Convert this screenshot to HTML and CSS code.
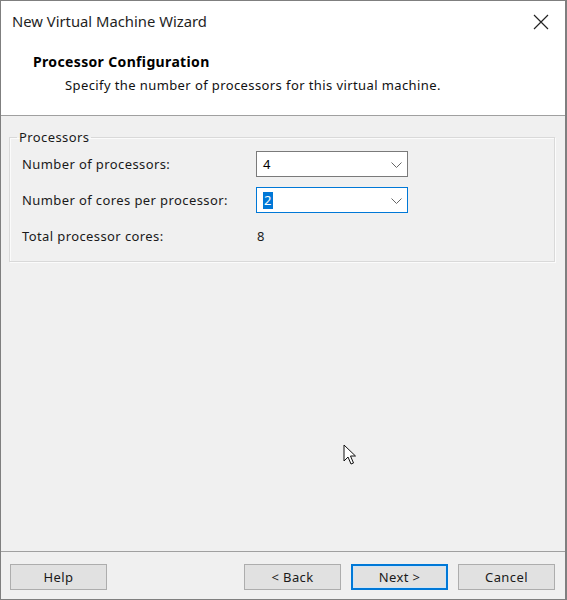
FILE: index.html
```html
<!DOCTYPE html>
<html lang="en">
<head>
  <meta charset="UTF-8">
  <meta name="viewport" content="width=device-width, initial-scale=1.0">
  <title>New Virtual Machine Wizard</title>
  <link rel="stylesheet" href="styles.css">
</head>
<body>
  <div class="window">
    <div class="titlebar">
      <span class="title">New Virtual Machine Wizard</span>
      <svg class="close" width="16" height="16" viewBox="0 0 16 16">
        <path d="M1 1 L15 15 M15 1 L1 15" stroke="#222" stroke-width="1.2" fill="none"/>
      </svg>
    </div>

    <div class="header">
      <div class="heading">Processor Configuration</div>
      <div class="subtitle">Specify the number of processors for this virtual machine.</div>
    </div>

    <div class="content">
      <fieldset class="group">
        <legend>Processors</legend>
        <div class="row">
          <span class="label">Number of processors:</span>
          <div class="combo">
            <span class="value">4</span>
            <svg class="chevron" width="11" height="6" viewBox="0 0 11 6"><path d="M0.5 0.5 L5.5 5.5 L10.5 0.5" stroke="#666" fill="none"/></svg>
          </div>
        </div>
        <div class="row">
          <span class="label">Number of cores per processor:</span>
          <div class="combo focused">
            <span class="value selected">2</span>
            <svg class="chevron" width="11" height="6" viewBox="0 0 11 6"><path d="M0.5 0.5 L5.5 5.5 L10.5 0.5" stroke="#666" fill="none"/></svg>
          </div>
        </div>
        <div class="row">
          <span class="label">Total processor cores:</span>
          <span class="total">8</span>
        </div>
      </fieldset>

      <svg class="cursor" width="14" height="22" viewBox="0 0 14 22">
        <path d="M1 1 L1 17 L5 13 L8 20 L10.5 19 L7.5 12 L12.5 12 Z" fill="#fff" stroke="#111" stroke-width="1" stroke-linejoin="miter"/>
      </svg>
    </div>

    <div class="footer">
      <button class="btn">Help</button>
      <div class="spacer"></div>
      <button class="btn">&lt; Back</button>
      <button class="btn default">Next &gt;</button>
      <button class="btn">Cancel</button>
    </div>
  </div>
</body>
</html>
```

FILE: styles.css
```css
* {
  margin:0;
  padding:0;
  box-sizing:border-box;
}

body {
  width:567px;
  height:600px;
  background:#fff;
  font-family:"Noto Sans", "Open Sans", sans-serif;
  font-size:13px;
  letter-spacing:0.4px;
  color:#1a1a1a;
}

.window {
  width:567px;
  height:600px;
  border:1px solid #7f7f7f;
  border-right-width:2px;
  display:flex;
  flex-direction:column;
  background:#f0f0f0;
}

.titlebar {
  height:43px;
  background:#fff;
  display:flex;
  align-items:center;
  justify-content:space-between;
  padding:0 16px 0 11px;
}

.title {
  font-size:14.8px;
  letter-spacing:0;
  color:#1f1f1f;
  margin-top:-4px;
}

.close {
  margin-top:-2px;
}

.header {
  background:#fff;
  padding:9px 0 21px 32px;
  border-bottom:1px solid #a0a0a0;
}

.heading {
  font-weight:bold;
  font-size:14px;
  letter-spacing:0.35px;
  line-height:18px;
  color:#000;
}

.subtitle {
  margin-top:5px;
  margin-left:32px;
  line-height:18px;
  color:#111;
}

.content {
  flex:1;
  position:relative;
  padding:12px 10px 0 8px;
}

.group {
  border:1px solid #d9d9d9;
  box-shadow:inset 1px 1px 0 #fbfbfb, 1px 1px 0 #fbfbfb;
  padding:5px 12px 12px 12px;
}

.group legend {
  margin-left:-5px;
  padding:0 2px;
  line-height:18px;
  color:#1a1a1a;
}

.row {
  display:grid;
  grid-template-columns:234px 152px;
  align-items:center;
  height:26px;
  margin-bottom:10px;
}

.row:last-child {
  margin-bottom:0;
}

.combo {
  height:26px;
  background:#fff;
  border:1px solid #7a7a7a;
  display:flex;
  align-items:center;
  justify-content:space-between;
  padding:0 5px 0 6px;
}

.combo.focused {
  border-color:#0078d7;
}

.value {
  line-height:17px;
  color:#000;
}

.value.selected {
  background:#0078d7;
  color:#fff;
  padding:0 1px;
}

.chevron {
  margin-top:1px;
}

.total {
  padding-left:1px;
  color:#1a1a1a;
}

.cursor {
  position:absolute;
  left:342px;
  top:328px;
}

.footer {
  border-top:1px solid #a0a0a0;
  display:flex;
  padding:12px 10px 9px 9px;
  gap:10px;
}

.spacer {
  flex:1;
}

.btn {
  width:97px;
  height:26px;
  background:#e1e1e1;
  border:1px solid #adadad;
  font-family:"Noto Sans", "Open Sans", sans-serif;
  font-size:13px;
  letter-spacing:0.4px;
  color:#1a1a1a;
}

.btn.default {
  border:2px solid #0078d7;
  box-shadow:inset 0 0 0 1px #cde4f7;
}
```
